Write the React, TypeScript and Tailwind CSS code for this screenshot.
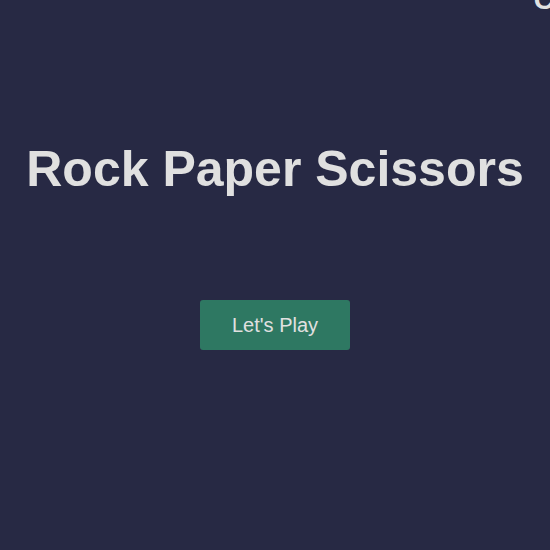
export default function App() {
  return (
    <div className="relative w-[550px] h-[550px] overflow-hidden bg-[#272944] text-[#e0e0e0]" style={{ fontFamily: '"Liberation Sans", Arial, sans-serif' }}>
      <div className="absolute right-[-4px] top-[-14px] text-[28px] font-bold leading-none">C</div>
      <div className="flex flex-col items-center pt-[141px]">
        <h1 className="text-[50px] font-bold leading-[56px]">Rock Paper Scissors</h1>
        <button className="mt-[103px] w-[150px] h-[50px] rounded-[3px] bg-[#2e7862] text-[20px] text-[#e0e0e0]">Let's Play</button>
      </div>
    </div>
  );
}
